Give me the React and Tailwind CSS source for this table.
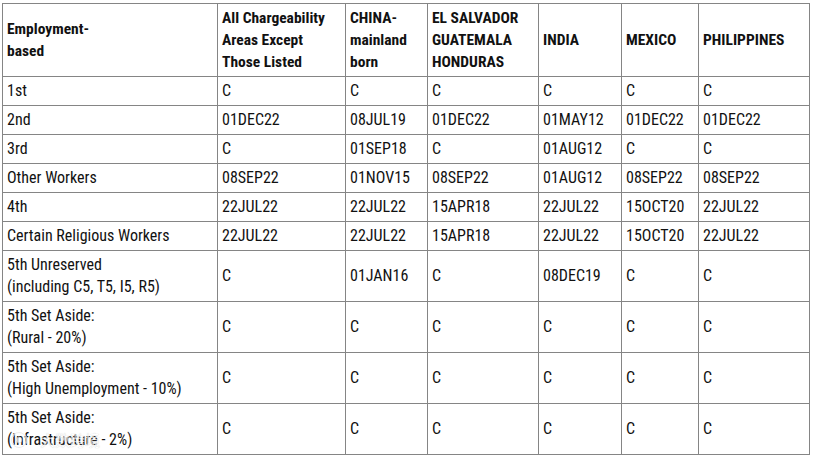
import React from 'react';

const headers = [
  ['Employment-', 'based'],
  ['All Chargeability', 'Areas Except', 'Those Listed'],
  ['CHINA-', 'mainland', 'born'],
  ['EL SALVADOR', 'GUATEMALA', 'HONDURAS'],
  ['INDIA'],
  ['MEXICO'],
  ['PHILIPPINES'],
];

const rows = [
  { label: ['1st'], cells: ['C', 'C', 'C', 'C', 'C', 'C'] },
  { label: ['2nd'], cells: ['01DEC22', '08JUL19', '01DEC22', '01MAY12', '01DEC22', '01DEC22'] },
  { label: ['3rd'], cells: ['C', '01SEP18', 'C', '01AUG12', 'C', 'C'] },
  { label: ['Other Workers'], cells: ['08SEP22', '01NOV15', '08SEP22', '01AUG12', '08SEP22', '08SEP22'] },
  { label: ['4th'], cells: ['22JUL22', '22JUL22', '15APR18', '22JUL22', '15OCT20', '22JUL22'] },
  { label: ['Certain Religious Workers'], cells: ['22JUL22', '22JUL22', '15APR18', '22JUL22', '15OCT20', '22JUL22'] },
  { label: ['5th Unreserved', '(including C5, T5, I5, R5)'], cells: ['C', '01JAN16', 'C', '08DEC19', 'C', 'C'] },
  { label: ['5th Set Aside:', '(Rural - 20%)'], cells: ['C', 'C', 'C', 'C', 'C', 'C'] },
  { label: ['5th Set Aside:', '(High Unemployment - 10%)'], cells: ['C', 'C', 'C', 'C', 'C', 'C'] },
  { label: ['5th Set Aside:', '(Infrastructure - 2%)'], cells: ['C', 'C', 'C', 'C', 'C', 'C'] },
];

const widths = ['w-[215px]', 'w-[128px]', 'w-[82px]', 'w-[111px]', 'w-[83px]', 'w-[77px]', 'w-[111px]'];

export default function App() {
  return (
    <div className="relative w-[813px] h-[460px] bg-white overflow-hidden pt-[3px] pl-[2px] font-['Roboto_Condensed','Roboto',sans-serif] text-[16px] leading-[22px] text-[#111]">
      <table className="table-fixed border-collapse w-[808px]">
        <colgroup>
          {widths.map((w, i) => (
            <col key={i} className={w} />
          ))}
        </colgroup>
        <thead>
          <tr className="h-[73px]">
            {headers.map((h, i) => (
              <th key={i} className="border border-[#858585] px-[4px] text-left align-middle font-bold text-[15.5px]">
                {h.map((line, j) => (
                  <div key={j}>{line}</div>
                ))}
              </th>
            ))}
          </tr>
        </thead>
        <tbody>
          {rows.map((r, i) => (
            <tr key={i} className={r.label.length > 1 ? 'h-[51px]' : 'h-[29px]'}>
              <td className="border border-[#858585] px-[4px] align-middle">
                {r.label.map((line, j) => (
                  <div key={j}>{line}</div>
                ))}
              </td>
              {r.cells.map((c, j) => (
                <td key={j} className="border border-[#858585] px-[4px] align-middle">
                  {c}
                </td>
              ))}
            </tr>
          ))}
        </tbody>
      </table>

      {/* watermark */}
      <div className="absolute left-[10px] top-[429px] flex items-center gap-[12px] text-white opacity-70 [text-shadow:0_0_1px_#aaa]">
        <svg width="18" height="18" viewBox="0 0 18 18" fill="none">
          <circle cx="9" cy="9" r="7.5" stroke="#fff" strokeWidth="2" />
          <circle cx="9" cy="9" r="7.5" stroke="#ccc" strokeWidth="0.5" />
          <circle cx="9" cy="9" r="3" fill="#fff" stroke="#ccc" strokeWidth="0.5" />
        </svg>
        <span className="text-[15px] font-['Noto_Sans_CJK_SC',sans-serif]">大数跨境</span>
      </div>
    </div>
  );
}
